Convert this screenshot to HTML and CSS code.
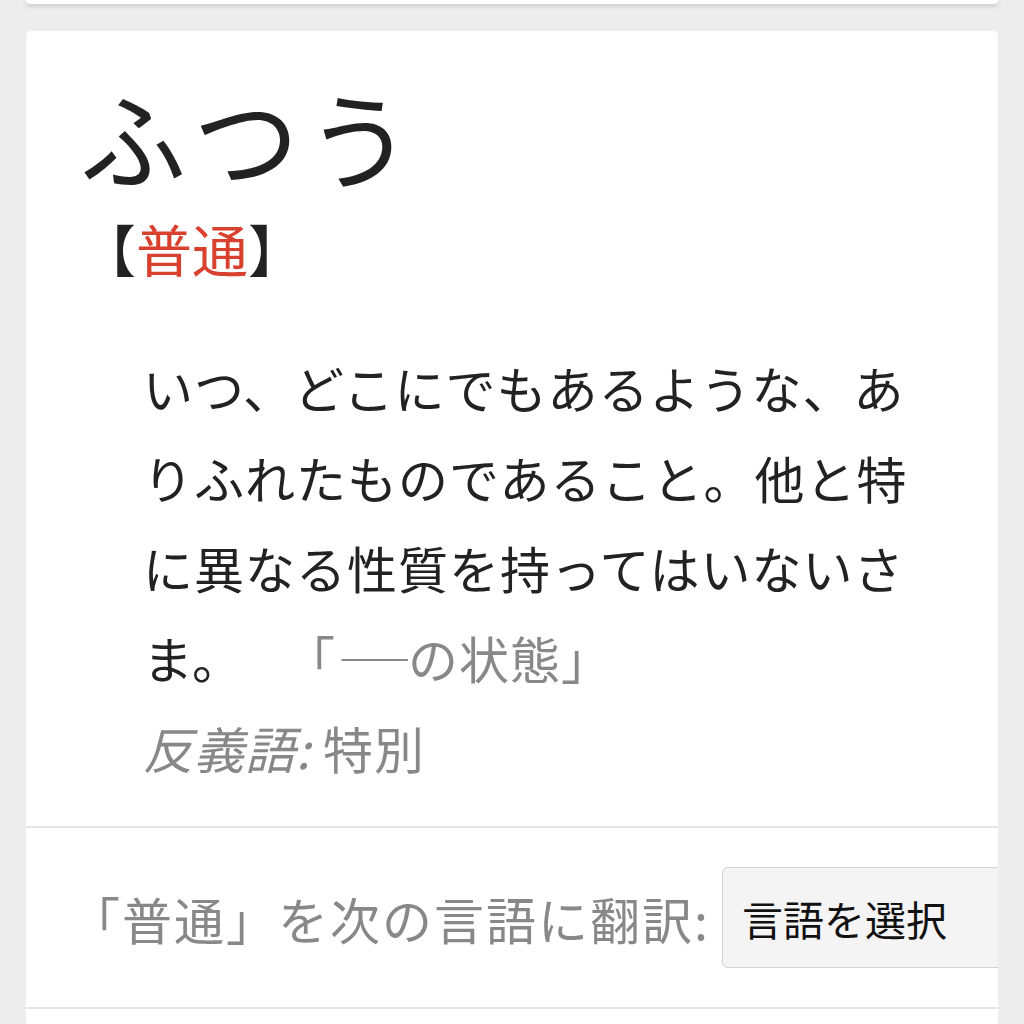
FILE: index.html
```html
<!DOCTYPE html>
<html lang="ja">
<head>
  <meta charset="UTF-8">
  <meta name="viewport" content="width=device-width, initial-scale=1">
  <title>ふつう【普通】</title>
  <link rel="stylesheet" href="styles.css">
</head>
<body>

  <!-- 前のカードの下端 -->
  <div class="card-prev"></div>

  <div class="card">
    <div class="entry">
      <h1 class="headword">ふつう</h1>
      <div class="reading">【<span class="kanji">普通</span>】</div>

      <div class="sense">
        <p class="definition">いつ、どこにでもあるような、ありふれたものであること。他と特に異なる性質を持ってはいないさま。<span class="example">「<span class="dash">―</span>の状態」</span></p>
        <p class="antonym"><em>反義語:</em> 特別</p>
      </div>
    </div>

    <div class="translate">
      <span class="translate-label">「普通」を次の言語に翻訳:</span>
      <div class="lang-select">言語を選択</div>
    </div>

    <div class="card-foot"></div>
  </div>

</body>
</html>
```

FILE: styles.css
```css
body {
  font-family: "Noto Sans CJK JP", "Noto Sans", sans-serif;
  background-color: #ededed;
  color: #222;
  margin: 0;
  padding: 0 26px;
  overflow: hidden;
}

.card-prev {
  height: 4px;
  background-color: #fff;
  border-radius: 0 0 4px 4px;
  box-shadow: 0 2px 5px rgba(0, 0, 0, 0.18);
}

.card {
  margin-top: 27px;
  background-color: #fff;
  border-radius: 5px 5px 0 0;
  overflow: hidden;
}

.entry {
  padding: 41px 54px 34px;
}
.headword {
  font-size: 106px;
  font-weight: normal;
  line-height: 1.2;
  letter-spacing: 7px;
  margin: 0;
}
.reading {
  font-size: 56px;
  line-height: 1.2;
  margin-top: 15px;
}
.reading .kanji {
  color: #d9412f;
}

/* 語義 */
.sense {
  margin-top: 61px;
  padding-left: 63px;
  width: 772px;
  font-size: 50px;
  line-height: 90px;
  letter-spacing: 1px;
  text-spacing-trim: space-all;
}
.definition {
  margin: 0;
}
.example {
  color: #888;
  margin-left: 42px;
}
/* ダッシュを横に伸ばす */
.example .dash {
  display: inline-block;
  transform: scaleX(1.55);
  transform-origin: left center;
  margin-right: 21px;
}
.antonym {
  margin: 0;
  color: #888;
}

/* 翻訳 */
.translate {
  display: flex;
  align-items: center;
  gap: 12px;
  padding: 39px 0 39px 44px;
  border-top: 2px solid #e4e4e4;
  border-bottom: 2px solid #e4e4e4;
}
.translate-label {
  font-size: 50px;
  letter-spacing: 2px;
  color: #888;
  white-space: nowrap;
  text-spacing-trim: space-all;
}
.lang-select {
  flex: none;
  width: 320px;
  height: 101px;
  display: flex;
  align-items: center;
  padding-left: 19px;
  font-size: 41px;
  color: #111;
  background-color: #f4f4f4;
  border: 1px solid #d2d2d2;
  border-radius: 6px;
  box-sizing: border-box;
}

.card-foot {
  height: 200px;
}
```
